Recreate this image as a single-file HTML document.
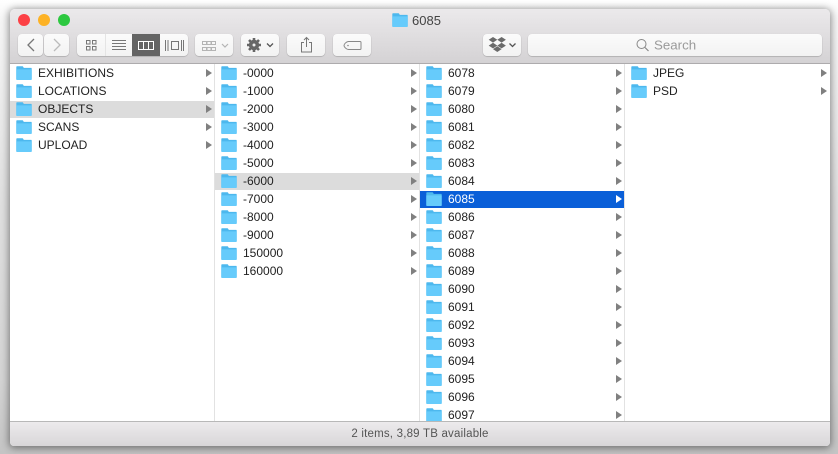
<!DOCTYPE html>
<html><head><meta charset="utf-8"><style>
html,body{margin:0;padding:0;width:838px;height:454px;overflow:hidden;background:#fff;font-family:"Liberation Sans",sans-serif}
#shade{position:absolute;left:0;top:0;width:838px;height:454px;background:linear-gradient(#fff 0,#f6f6f6 20px,#e0e0e0 200px,#d4d4d4 380px,#c4c4c4 454px)}
#win{position:absolute;left:10px;top:9px;width:820px;height:437px;border-radius:5px 5px 4px 4px;overflow:hidden;box-shadow:0 1px 8px 1px rgba(0,0,0,.45);background:#fff;filter:blur(.3px)}
#bar{position:absolute;left:0;top:0;width:820px;height:54px;background:linear-gradient(#ebe9eb,#d4d2d4);border-bottom:1px solid #adabad}
.lt{position:absolute;top:5px;width:12px;height:12px;border-radius:50%}
.b{position:absolute;top:25px;height:22px;background:linear-gradient(#fbfbfb,#f2f2f2);border-radius:4px;box-shadow:0 .5px 1px rgba(0,0,0,.3);box-sizing:border-box}
.b svg{position:absolute;left:0;top:0}
#ttl{position:absolute;left:402px;top:4px;font-size:13px;line-height:15px;color:#444}
.col{position:absolute;top:55px;height:358px;width:204px;background:#fff;overflow:hidden}
.r{position:absolute;left:0;width:100%;height:18px;font-size:12px;line-height:18px;color:#222}
.r svg.f{position:absolute;left:6px;top:2px;height:14px}
.r span{position:absolute;left:28px;top:0;white-space:nowrap}
.r i{position:absolute;right:2px;top:5px;width:0;height:0;border-left:6.5px solid #808080;border-top:4px solid transparent;border-bottom:4px solid transparent}
.g{background:linear-gradient(#fff 1px,#dcdcdc 1px)}
.s{background:linear-gradient(#fff 1px,#0a5fd8 1px);color:#fff}
.s i{border-left-color:#fff}
#foot{position:absolute;left:0;top:412px;width:820px;height:25px;box-sizing:border-box;border-top:1px solid #b8b8b8;background:linear-gradient(#eceaec,#d8d6d8);text-align:center;font-size:11.5px;letter-spacing:.2px;line-height:25px;color:#555}
</style></head><body>
<svg width="0" height="0" style="position:absolute"><defs>
<symbol id="fd" viewBox="0 0 16 14"><path d="M.3 3V1.200C.3.600.7.300 1.200.300h5c.5 0 .8.200 1 .6l.6 1h7.300c.4 0 .6.300.6.600v10.400c0 .4-.2.800-.6.800H.9c-.4 0-.6-.4-.6-.8z" fill="#4db8ee"/><path d="M.3 3.400h15.400v9.800c0 .4-.2.800-.6.800H.9c-.4 0-.6-.4-.6-.8z" fill="#66cbfb"/></symbol>
</defs></svg>
<div id="shade"></div>
<div id="win">
<div id="bar">
<div class="lt" style="left:8px;background:#fc4045"></div>
<div class="lt" style="left:28px;background:#fdb225"></div>
<div class="lt" style="left:48px;background:#2dc840"></div>
<svg style="position:absolute;left:382px;top:4px" width="16" height="14"><use href="#fd"/></svg>
<div id="ttl">6085</div>
<div class="b" style="left:8px;width:25px"><svg width="25" height="22"><path d="M16 5l-6 6 6 6" fill="none" stroke="#777" stroke-width="1.300"/></svg></div>
<div class="b" style="left:34px;width:25px"><svg width="25" height="22"><path d="M10 5l6 6-6 6" fill="none" stroke="#bbb" stroke-width="1.300"/></svg></div>
<div class="b" style="left:67px;width:111px;overflow:hidden">
<svg width="111" height="22"><g fill="none" stroke="#777"><rect x="9.500" y="6.500" width="3.500" height="3.500"/><rect x="15.500" y="6.500" width="3.500" height="3.500"/><rect x="9.500" y="12.500" width="3.500" height="3.500"/><rect x="15.500" y="12.500" width="3.500" height="3.500"/><path d="M35 6.500h14M35 9.500h14M35 12.500h14M35 15.500h14"/></g><path d="M28.500 0v22" stroke="#e4e4e4"/><rect x="55" y="0" width="28" height="22" fill="#646464"/><g fill="none" stroke="#fff"><rect x="61.500" y="7.500" width="15" height="8"/><path d="M66.500 7.500v8M71.500 7.500v8"/></g><g fill="none" stroke="#777"><rect x="94.500" y="7.500" width="7" height="8"/><path d="M88.500 6v11M91 6v11M104.500 6v11M106.500 6v11"/></g></svg></div>
<div class="b" style="left:185px;width:38px"><svg width="38" height="22"><g fill="none" stroke="#b4b4b4"><path d="M7.500 7.500h4v3h-4zM12 7.500h4v3h-4zM16.500 7.500h4v3h-4zM7.500 13.500h4v3h-4zM12 13.500h4v3h-4zM16.500 13.500h4v3h-4z"/><path d="M27 10l3 3 3-3" stroke-width="1.200"/></g></svg></div>
<div class="b" style="left:231px;width:38px"><svg width="38" height="22"><circle cx="13" cy="11" r="5.200" fill="#666"/><path d="M13 4v14M6 11h14M8 6l10 10M18 6L8 16" stroke="#666" stroke-width="2.600"/><circle cx="13" cy="11" r="1.500" fill="#eee"/><path d="M26 9.500l3 3 3-3" fill="none" stroke="#555" stroke-width="1.300"/></svg></div>
<div class="b" style="left:277px;width:38px"><svg width="38" height="22"><path d="M17 8.500h-2.500v9.500h10v-9.500H22M19.500 13V3.500M17 6l2.500-2.500L22 6" fill="none" stroke="#777"/></svg></div>
<div class="b" style="left:323px;width:38px"><svg width="38" height="22"><path d="M15.500 7.500h11.500a1 1 0 0 1 1 1v6a1 1 0 0 1-1 1H15.500c-2 0-4.500-2.500-4.500-4s2.500-4 4.500-4z" fill="none" stroke="#888"/><circle cx="15" cy="11.500" r=".8" fill="#888"/></svg></div>
<div class="b" style="left:473px;width:38px"><svg width="38" height="22"><path d="M10 3l4.300 2.800L10 8.600 5.700 5.800zM18.600 3l4.300 2.800-4.300 2.800-4.300-2.800zM10 8.800l4.300 2.800L10 14.400l-4.300-2.800zM18.600 8.800l4.300 2.800-4.300 2.800-4.300-2.800zM14.300 12.300l4.300 2.800-4.300 2.900-4.300-2.900z" fill="#6a6a6a"/><path d="M26.500 9.500l3 3 3-3" fill="none" stroke="#555" stroke-width="1.300"/></svg></div>
<div class="b" style="left:518px;width:294px"><svg width="294" height="22"><circle cx="113.500" cy="10" r="4.500" fill="none" stroke="#888"/><path d="M117 13.500l3.500 3.500" stroke="#888" stroke-width="1.200"/><text x="126" y="15.500" font-family="Liberation Sans" font-size="13.300" fill="#9a9a9a">Search</text></svg></div>
</div>

<div class="col" style="left:0">
<div class="r" style="top:0"><svg class="f" width="16" height="14"><use href="#fd"/></svg><span>EXHIBITIONS</span><i></i></div>
<div class="r" style="top:18px"><svg class="f" width="16" height="14"><use href="#fd"/></svg><span>LOCATIONS</span><i></i></div>
<div class="r g" style="top:36px"><svg class="f" width="16" height="14"><use href="#fd"/></svg><span>OBJECTS</span><i></i></div>
<div class="r" style="top:54px"><svg class="f" width="16" height="14"><use href="#fd"/></svg><span>SCANS</span><i></i></div>
<div class="r" style="top:72px"><svg class="f" width="16" height="14"><use href="#fd"/></svg><span>UPLOAD</span><i></i></div>
</div>
<div style="position:absolute;left:204px;top:55px;width:1px;height:358px;background:#e2e2e2"></div>

<div class="col" style="left:205px">
<div class="r" style="top:0"><svg class="f" width="16" height="14"><use href="#fd"/></svg><span>-0000</span><i></i></div>
<div class="r" style="top:18px"><svg class="f" width="16" height="14"><use href="#fd"/></svg><span>-1000</span><i></i></div>
<div class="r" style="top:36px"><svg class="f" width="16" height="14"><use href="#fd"/></svg><span>-2000</span><i></i></div>
<div class="r" style="top:54px"><svg class="f" width="16" height="14"><use href="#fd"/></svg><span>-3000</span><i></i></div>
<div class="r" style="top:72px"><svg class="f" width="16" height="14"><use href="#fd"/></svg><span>-4000</span><i></i></div>
<div class="r" style="top:90px"><svg class="f" width="16" height="14"><use href="#fd"/></svg><span>-5000</span><i></i></div>
<div class="r g" style="top:108px"><svg class="f" width="16" height="14"><use href="#fd"/></svg><span>-6000</span><i></i></div>
<div class="r" style="top:126px"><svg class="f" width="16" height="14"><use href="#fd"/></svg><span>-7000</span><i></i></div>
<div class="r" style="top:144px"><svg class="f" width="16" height="14"><use href="#fd"/></svg><span>-8000</span><i></i></div>
<div class="r" style="top:162px"><svg class="f" width="16" height="14"><use href="#fd"/></svg><span>-9000</span><i></i></div>
<div class="r" style="top:180px"><svg class="f" width="16" height="14"><use href="#fd"/></svg><span>150000</span><i></i></div>
<div class="r" style="top:198px"><svg class="f" width="16" height="14"><use href="#fd"/></svg><span>160000</span><i></i></div>
</div>
<div style="position:absolute;left:409px;top:55px;width:1px;height:358px;background:#e2e2e2"></div>

<div class="col" style="left:410px">
<div class="r" style="top:0"><svg class="f" width="16" height="14"><use href="#fd"/></svg><span>6078</span><i></i></div>
<div class="r" style="top:18px"><svg class="f" width="16" height="14"><use href="#fd"/></svg><span>6079</span><i></i></div>
<div class="r" style="top:36px"><svg class="f" width="16" height="14"><use href="#fd"/></svg><span>6080</span><i></i></div>
<div class="r" style="top:54px"><svg class="f" width="16" height="14"><use href="#fd"/></svg><span>6081</span><i></i></div>
<div class="r" style="top:72px"><svg class="f" width="16" height="14"><use href="#fd"/></svg><span>6082</span><i></i></div>
<div class="r" style="top:90px"><svg class="f" width="16" height="14"><use href="#fd"/></svg><span>6083</span><i></i></div>
<div class="r" style="top:108px"><svg class="f" width="16" height="14"><use href="#fd"/></svg><span>6084</span><i></i></div>
<div class="r s" style="top:126px"><svg class="f" width="16" height="14"><use href="#fd"/></svg><span>6085</span><i></i></div>
<div class="r" style="top:144px"><svg class="f" width="16" height="14"><use href="#fd"/></svg><span>6086</span><i></i></div>
<div class="r" style="top:162px"><svg class="f" width="16" height="14"><use href="#fd"/></svg><span>6087</span><i></i></div>
<div class="r" style="top:180px"><svg class="f" width="16" height="14"><use href="#fd"/></svg><span>6088</span><i></i></div>
<div class="r" style="top:198px"><svg class="f" width="16" height="14"><use href="#fd"/></svg><span>6089</span><i></i></div>
<div class="r" style="top:216px"><svg class="f" width="16" height="14"><use href="#fd"/></svg><span>6090</span><i></i></div>
<div class="r" style="top:234px"><svg class="f" width="16" height="14"><use href="#fd"/></svg><span>6091</span><i></i></div>
<div class="r" style="top:252px"><svg class="f" width="16" height="14"><use href="#fd"/></svg><span>6092</span><i></i></div>
<div class="r" style="top:270px"><svg class="f" width="16" height="14"><use href="#fd"/></svg><span>6093</span><i></i></div>
<div class="r" style="top:288px"><svg class="f" width="16" height="14"><use href="#fd"/></svg><span>6094</span><i></i></div>
<div class="r" style="top:306px"><svg class="f" width="16" height="14"><use href="#fd"/></svg><span>6095</span><i></i></div>
<div class="r" style="top:324px"><svg class="f" width="16" height="14"><use href="#fd"/></svg><span>6096</span><i></i></div>
<div class="r" style="top:342px"><svg class="f" width="16" height="14"><use href="#fd"/></svg><span>6097</span><i></i></div>
</div>
<div style="position:absolute;left:614px;top:55px;width:1px;height:358px;background:#e2e2e2"></div>

<div class="col" style="left:615px;width:205px">
<div class="r" style="top:0"><svg class="f" width="16" height="14"><use href="#fd"/></svg><span>JPEG</span><i style="right:3px"></i></div>
<div class="r" style="top:18px"><svg class="f" width="16" height="14"><use href="#fd"/></svg><span>PSD</span><i style="right:3px"></i></div>
</div>

<div id="foot">2 items, 3,89 TB available</div>
</div>
</body></html>
